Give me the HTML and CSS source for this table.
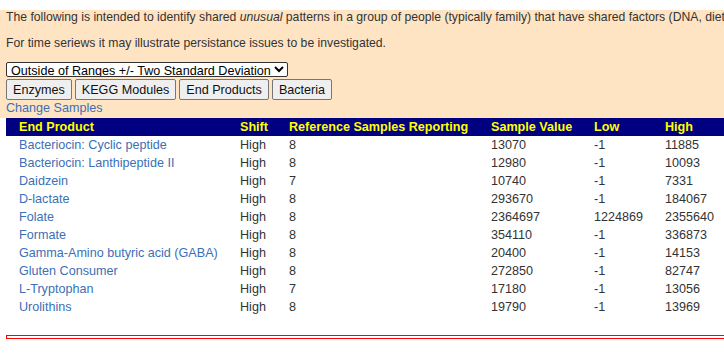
FILE: index.html
```html
<!DOCTYPE html>
<html lang="en">
<head>
    <meta charset="UTF-8">
    <meta name="viewport" content="width=device-width, initial-scale=1.0">
    <title>Shared Unusual Patterns</title>
    <link rel="stylesheet" href="styles.css">
</head>
<body>
    <div class="intro">
        <p>The following is intended to identify shared <i>unusual</i> patterns in a group of people (typically family) that have shared factors (DNA, diet, environment) in common.</p>
        <p>For time seriews it may illustrate persistance issues to be investigated.</p>

        <form class="filters">
            <select class="range-select">
                <option>Outside of Ranges +/- Two Standard Deviation</option>
                <option>Outside of Ranges +/- One Standard Deviation</option>
            </select>
            <div class="tabs">
                <button type="button">Enzymes</button>
                <button type="button">KEGG Modules</button>
                <button type="button">End Products</button>
                <button type="button">Bacteria</button>
            </div>
            <a class="change" href="#">Change Samples</a>
        </form>
    </div>

    <table class="results">
        <colgroup>
            <col class="c-product">
            <col class="c-shift">
            <col class="c-ref">
            <col class="c-value">
            <col class="c-low">
            <col class="c-high">
        </colgroup>
        <thead>
            <tr>
                <th>End Product</th>
                <th>Shift</th>
                <th>Reference Samples Reporting</th>
                <th>Sample Value</th>
                <th>Low</th>
                <th>High</th>
            </tr>
        </thead>
        <tbody>
            <tr><td><a href="#">Bacteriocin: Cyclic peptide</a></td><td>High</td><td>8</td><td>13070</td><td>-1</td><td>11885</td></tr>
            <tr><td><a href="#">Bacteriocin: Lanthipeptide II</a></td><td>High</td><td>8</td><td>12980</td><td>-1</td><td>10093</td></tr>
            <tr><td><a href="#">Daidzein</a></td><td>High</td><td>7</td><td>10740</td><td>-1</td><td>7331</td></tr>
            <tr><td><a href="#">D-lactate</a></td><td>High</td><td>8</td><td>293670</td><td>-1</td><td>184067</td></tr>
            <tr><td><a href="#">Folate</a></td><td>High</td><td>8</td><td>2364697</td><td>1224869</td><td>2355640</td></tr>
            <tr><td><a href="#">Formate</a></td><td>High</td><td>8</td><td>354110</td><td>-1</td><td>336873</td></tr>
            <tr><td><a href="#">Gamma-Amino butyric acid (GABA)</a></td><td>High</td><td>8</td><td>20400</td><td>-1</td><td>14153</td></tr>
            <tr><td><a href="#">Gluten Consumer</a></td><td>High</td><td>8</td><td>272850</td><td>-1</td><td>82747</td></tr>
            <tr><td><a href="#">L-Tryptophan</a></td><td>High</td><td>7</td><td>17180</td><td>-1</td><td>13056</td></tr>
            <tr><td><a href="#">Urolithins</a></td><td>High</td><td>8</td><td>19790</td><td>-1</td><td>13969</td></tr>
        </tbody>
    </table>

    <div class="divider"></div>
</body>
</html>
```

FILE: styles.css
```css
html {
    overflow: hidden;
}

body {
    margin: 0;
    padding-top: 10px;
    width: 900px;
    font-family: "Liberation Sans", Arial, sans-serif;
    font-size: 12px;
    color: #333;
    background: white;
}

.intro {
    background: #ffe4c4;
    padding: 0 6px 2px;
}

.intro p {
    margin: 0 0 12px;
    font-size: 12.2px;
    white-space: nowrap;
}

.filters {
    margin: 0;
}

.range-select {
    font: inherit;
    font-size: 12.6px;
    color: #000;
    width: 282px;
    height: 15px;
    padding: 0;
    margin: 0 0 2px;
    border: 1px solid #333;
    border-radius: 2px;
    background: white;
}

.tabs {
    display: flex;
    gap: 3px;
}

.tabs button {
    font: inherit;
    font-size: 12.6px;
    color: #111;
    background: #efefef;
    border: 1px solid #767676;
    border-radius: 2px;
    padding: 2px 6px;
    height: 21px;
}

.change {
    display: block;
    font-size: 12.6px;
    line-height: 16px;
}

a {
    color: #3b6fb6;
    text-decoration: none;
}

.results {
    margin-left: 6px;
    border-collapse: collapse;
    table-layout: fixed;
    width: 894px;
    font-size: 12.6px;
}

.c-product { width: 232px; }
.c-shift { width: 49px; }
.c-ref { width: 202px; }
.c-value { width: 103px; }
.c-low { width: 71px; }

.results th {
    background: #000080;
    color: #ffff00;
    font-weight: bold;
    text-align: left;
    height: 18px;
    padding: 0 2px;
}

.results td {
    height: 18px;
    padding: 0 2px;
    white-space: nowrap;
}

.results th:first-child,
.results td:first-child {
    padding-left: 13px;
}

.divider {
    margin: 19px 0 0 6px;
    height: 2px;
    border: 1px solid red;
}
```
